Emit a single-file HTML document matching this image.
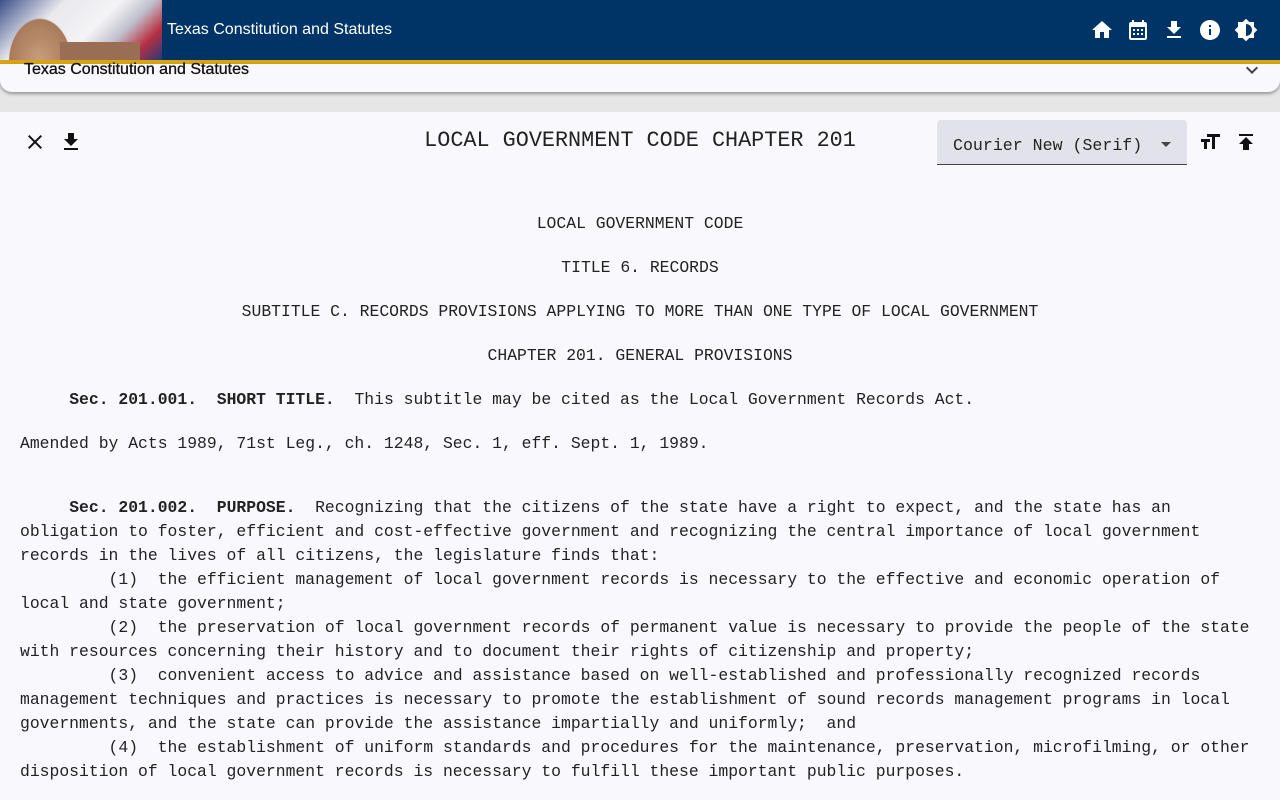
<!DOCTYPE html>
<html><head><meta charset="utf-8"><style>
*{margin:0;padding:0;box-sizing:border-box}
body{width:1280px;height:800px;overflow:hidden;background:#e6e6e6;font-family:"Liberation Sans",sans-serif;position:relative}
.hdr{position:absolute;left:0;top:0;width:1280px;height:64px;background:#013466;border-bottom:4px solid #d9a414}
.logo{position:absolute;left:0;top:0;width:162px;height:60px;overflow:hidden;background:linear-gradient(135deg,#3b4f8a 0%,#e9e9ee 30%,#f4f4f6 55%,#c0c0cc 70%,#b83040 85%,#243a7a 100%)}
.dome{position:absolute;left:4px;top:12px;width:72px;height:50px;background:radial-gradient(ellipse at 50% 100%,#c9a07e 0%,#a87a5a 60%,transparent 62%)}
.bld{position:absolute;left:60px;top:42px;width:80px;height:18px;background:#9a6e55}
.title{position:absolute;left:167px;top:21px;color:#fff;font-size:16px}
.card{position:absolute;left:0;top:64px;width:1280px;height:28px;background:#f9f9fd;border-radius:0 0 12px 12px;box-shadow:0 2px 3px rgba(0,0,0,.35)}
.card span{position:absolute;left:24px;top:-3px;font-size:16px;color:#111;-webkit-text-stroke:0.3px #111}
.main{position:absolute;left:0;top:112px;width:1280px;height:688px;background:#f9f9fd}
.l{position:absolute;font-family:"Liberation Mono","Courier New",monospace;font-size:16.4px;line-height:24px;white-space:pre;color:#222}
.c{left:0;width:1280px;text-align:center}
.h{position:absolute;left:0;width:1280px;text-align:center;top:128px;font-family:"Liberation Mono",monospace;font-size:21.8px;color:#222}
.sel{position:absolute;left:937px;top:120px;width:250px;height:45px;background:#e2e3ea;border-bottom:1px solid #444;border-radius:4px 4px 0 0}
.sel span{position:absolute;left:16px;top:16px;font-family:"Liberation Mono",monospace;font-size:16.6px;color:#222}
.sel i{position:absolute;left:224px;top:22px;border:5px solid transparent;border-top-color:#444}
svg{position:absolute}
</style></head><body>
<div class="hdr"><div class="logo"><div class="dome"></div><div class="bld"></div></div><div class="title">Texas Constitution and Statutes</div>
<svg style="left:1090px;top:18px" width="24" height="24" viewBox="0 0 24 24"><path fill="#fff" d="M10 20v-6h4v6h5v-8h3L12 3 2 12h3v8z"/></svg>
<svg style="left:1126px;top:18px" width="24" height="24" viewBox="0 0 24 24"><path fill="#fff" d="M19 4h-1V2h-2v2H8V2H6v2H5c-1.1 0-2 .9-2 2v14c0 1.1.9 2 2 2h14c1.1 0 2-.9 2-2V6c0-1.1-.9-2-2-2zm0 16H5V9h14zM7 11h2v2H7zm4 0h2v2h-2zm4 0h2v2h-2zM7 15h2v2H7zm4 0h2v2h-2zm4 0h2v2h-2z"/></svg>
<svg style="left:1162px;top:18px" width="24" height="24" viewBox="0 0 24 24"><path fill="#fff" d="M19 9h-4V3H9v6H5l7 7zM5 18v2h14v-2z"/></svg>
<svg style="left:1198px;top:18px" width="24" height="24" viewBox="0 0 24 24"><path fill="#fff" d="M12 2C6.48 2 2 6.480 2 12s4.48 10 10 10 10-4.48 10-10S17.52 2 12 2zm1 15h-2v-6h2zm0-8h-2V7h2z"/></svg>
<svg style="left:1234px;top:18px" width="24" height="24" viewBox="0 0 24 24"><path fill="#fff" d="M20 8.69V4h-4.69L12 .69 8.69 4H4v4.69L.69 12 4 15.31V20h4.69L12 23.31 15.31 20H20v-4.69L23.31 12zM12 18V6c3.31 0 6 2.69 6 6s-2.69 6-6 6z"/></svg>
</div>
<div class="card"><span>Texas Constitution and Statutes</span>
<svg style="left:1240px;top:-6px" width="24" height="24" viewBox="0 0 24 24"><path fill="#444" d="M7.41 8.59 12 13.17l4.59-4.58L18 10l-6 6-6-6z"/></svg></div>
<div class="main"></div>
<svg style="left:23px;top:130px" width="24" height="24" viewBox="0 0 24 24"><path fill="#111" d="M19 6.41 17.59 5 12 10.59 6.41 5 5 6.41 10.59 12 5 17.59 6.41 19 12 13.41 17.590 19 19 17.59 13.41 12z"/></svg>
<svg style="left:59px;top:130px" width="24" height="24" viewBox="0 0 24 24"><path fill="#111" d="M19 9h-4V3H9v6H5l7 7zM5 18v2h14v-2z"/></svg>
<div class="h">LOCAL GOVERNMENT CODE CHAPTER 201</div>
<div class="sel"><span>Courier New (Serif)</span><i></i></div>
<svg style="left:1198px;top:130px" width="24" height="24" viewBox="0 0 24 24"><path fill="#111" d="M9 4v3h5v12h3V7h5V4zM3 12h3v7h3v-7h3V9H3z"/></svg>
<svg style="left:1234px;top:130px" width="24" height="24" viewBox="0 0 24 24"><path fill="#111" d="M5 4v2h14V4zm0 10h4v6h6v-6h4l-7-7z"/></svg>
<div class="l c" style="top:212px">LOCAL GOVERNMENT CODE</div>
<div class="l c" style="top:256px">TITLE 6. RECORDS</div>
<div class="l c" style="top:300px">SUBTITLE C. RECORDS PROVISIONS APPLYING TO MORE THAN ONE TYPE OF LOCAL GOVERNMENT</div>
<div class="l c" style="top:344px">CHAPTER 201. GENERAL PROVISIONS</div>
<div class="l" style="left:20px;top:388px">     <b>Sec. 201.001.  SHORT TITLE.</b>  This subtitle may be cited as the Local Government Records Act.</div>
<div class="l" style="left:20px;top:432px">Amended by Acts 1989, 71st Leg., ch. 1248, Sec. 1, eff. Sept. 1, 1989.</div>
<div class="l" style="left:20px;top:496px">     <b>Sec. 201.002.  PURPOSE.</b>  Recognizing that the citizens of the state have a right to expect, and the state has an
obligation to foster, efficient and cost-effective government and recognizing the central importance of local government
records in the lives of all citizens, the legislature finds that:
         (1)  the efficient management of local government records is necessary to the effective and economic operation of
local and state government;
         (2)  the preservation of local government records of permanent value is necessary to provide the people of the state
with resources concerning their history and to document their rights of citizenship and property;
         (3)  convenient access to advice and assistance based on well-established and professionally recognized records
management techniques and practices is necessary to promote the establishment of sound records management programs in local
governments, and the state can provide the assistance impartially and uniformly;  and
         (4)  the establishment of uniform standards and procedures for the maintenance, preservation, microfilming, or other
disposition of local government records is necessary to fulfill these important public purposes.</div>
</body></html>
